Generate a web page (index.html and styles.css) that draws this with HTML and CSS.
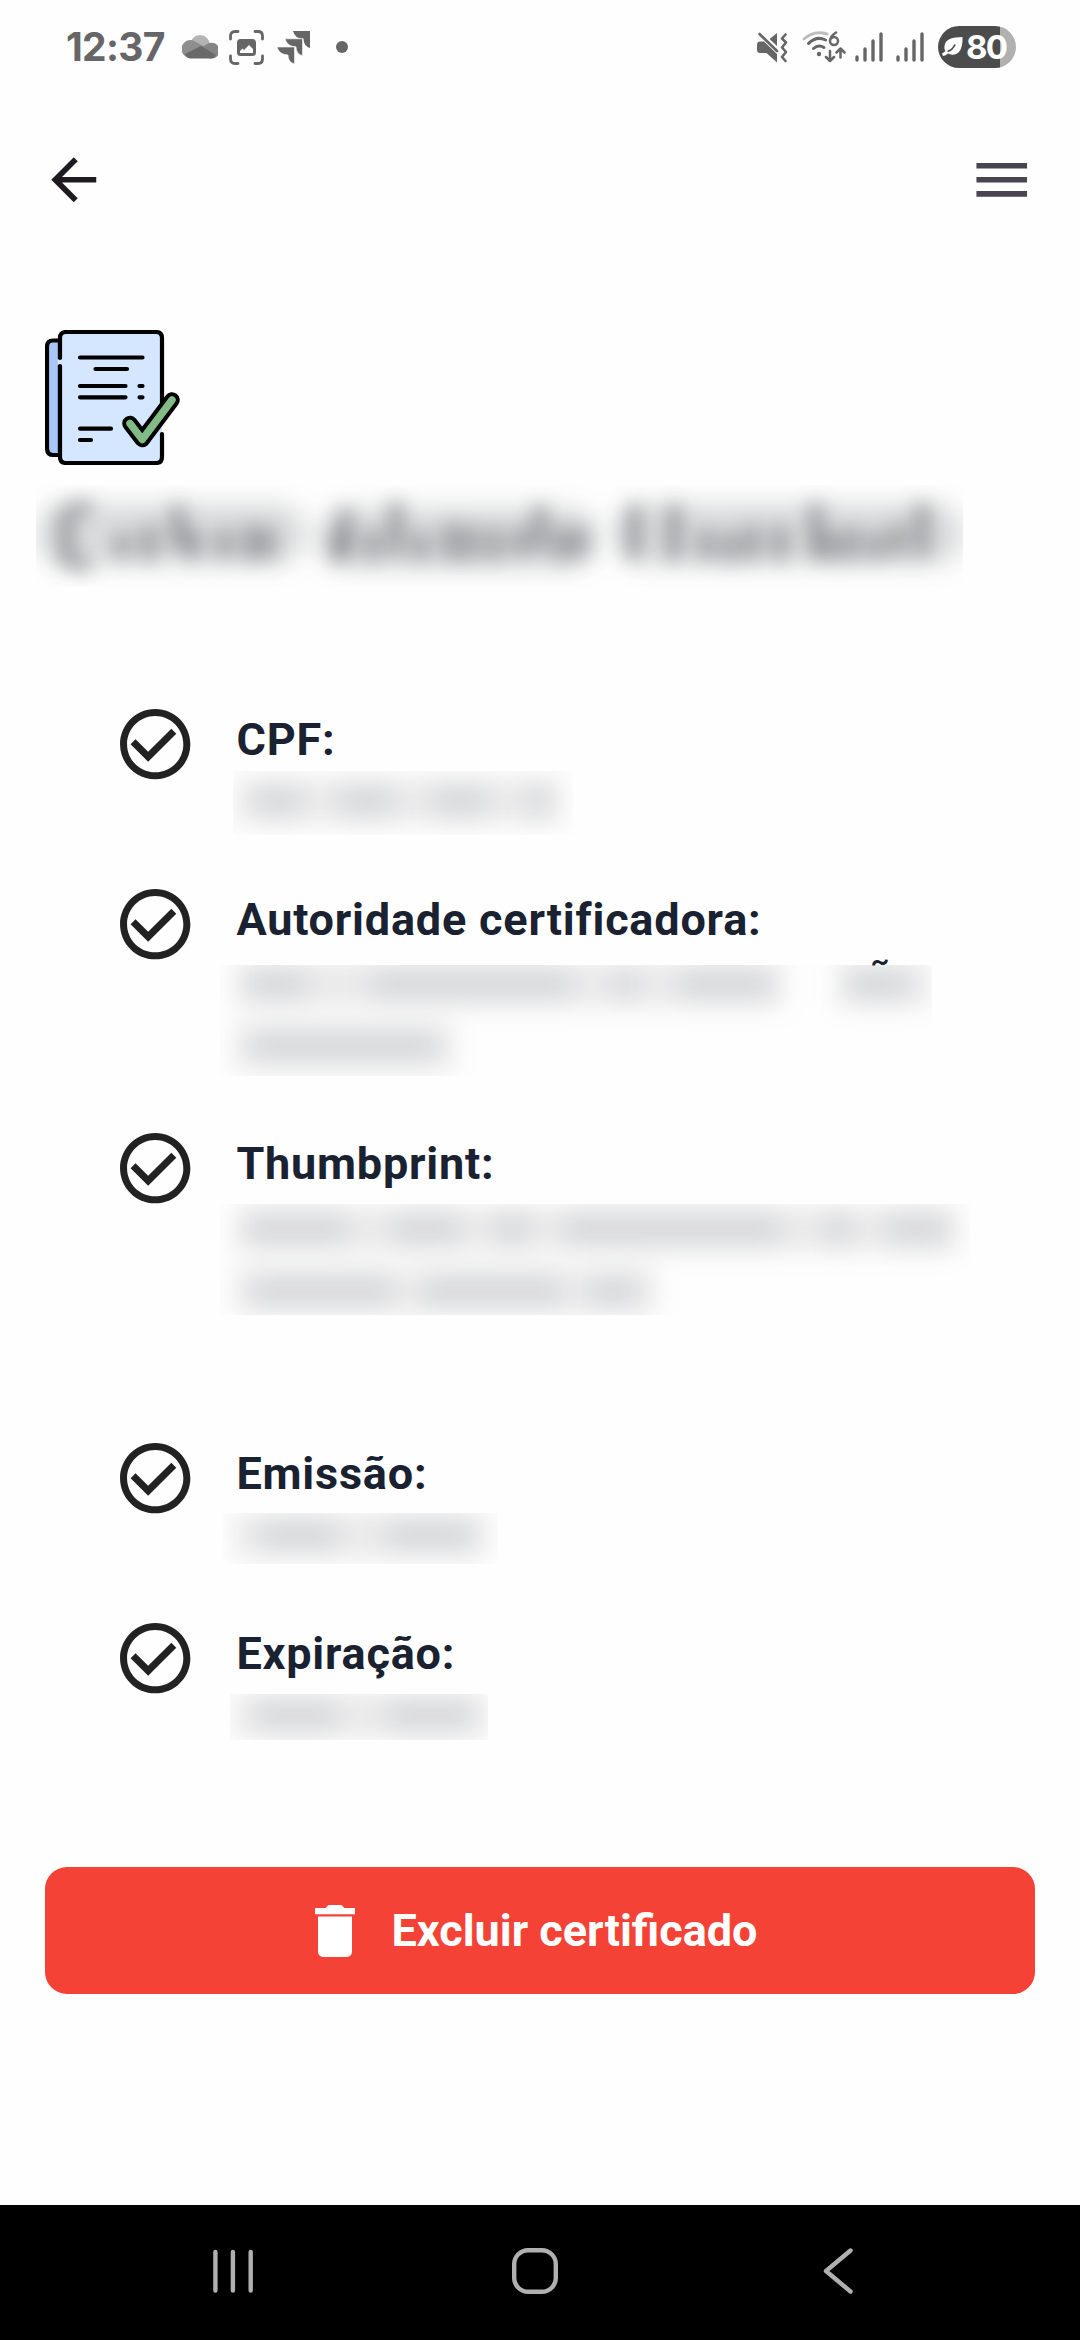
FILE: index.html
```
<!DOCTYPE html>
<html lang="pt-BR">
<head>
<meta charset="utf-8">
<title>Certificado</title>
<link rel="stylesheet" href="styles.css">
</head>
<body>
<svg class="defs" width="0" height="0" aria-hidden="true">
  <symbol id="check" viewBox="0 0 24 24"><path d="M16.59 7.58L10 14.17l-3.59-3.58L5 12l5 5 8-8zM12 2C6.48 2 2 6.48 2 12s4.48 10 10 10 10-4.48 10-10S17.52 2 12 2zm0 18c-4.42 0-8-3.58-8-8s3.58-8 8-8 8 3.58 8 8-3.58 8-8 8z"/></symbol>
  <symbol id="signal" viewBox="0 0 28 30"><path d="M2 25v3M10 17v11M18 9v19M26 2v26" fill="none" stroke="#666" stroke-width="3.4" stroke-linecap="round"/></symbol>
</svg>
<div class="screen">
  <header class="status">
    <div class="status-left">
      <span class="clock">12:37</span>
      <svg class="cloud" width="36" height="24" viewBox="0 0 36 24">
        <circle cx="18" cy="10" r="10" fill="#b4b4b4"/>
        <path d="M8 5a9 9 0 0 1 6 2l11 6-16 10A9 9 0 0 1 8 5z" fill="#8e8e8e"/>
        <path d="M14 16l11-7a8 8 0 1 1 3 14.500z" fill="#858585"/>
        <path d="M3 19l16-8 15 9q-2 3.500-6 3.500H8Q5 23 3 19z" fill="#696969"/>
      </svg>
      <svg class="capture" width="35" height="35" viewBox="0 0 35 35">
        <path d="M1.500 9V6q0-4.500 4.500-4.500h3M26 1.500h3q4.500 0 4.500 4.500v3M33.500 26v3q0 4.500-4.500 4.500h-3M9 33.500H6q-4.500 0-4.500-4.500v-3" fill="none" stroke="#666" stroke-width="2.800" stroke-linecap="round"/>
        <path d="M11.500 9h12q3.500 0 3.500 3.500v10q0 3.500-3.500 3.500h-12Q8 26 8 22.500v-10Q8 9 11.500 9zM11 23h13v-4l-4-4-5 5-1.500-1.500L11 21z" fill="#666" fill-rule="evenodd"/>
      </svg>
      <svg class="arrows" width="33" height="33" viewBox="0 0 33 33" fill="#666">
        <path d="M16 0h17v17q-6.500-2-6.500-9.500Q18 8 16 0z"/>
        <path d="M8 7.800h17.500v17q-6.500-2-6.500-9Q10 15.500 8 7.800z" stroke="#fefefe" stroke-width=".6"/>
        <path d="M0 16h17.500v17q-6.500-2-6.500-9Q2 23.500 0 16z" stroke="#fefefe" stroke-width=".6"/>
      </svg>
      <span class="dot"></span>
    </div>
    <div class="status-right">
      <svg class="mute" width="31" height="31" viewBox="0 0 31 31">
        <path d="M0 13q0-3.500 3-3.500h4L20 22v8.500L9.500 21H3q-3 0-3-3zM12.500 7L20 1v13z" fill="#666"/>
        <path d="M2.500 2L20 19" stroke="#666" stroke-width="2.600" stroke-linecap="round"/>
        <path d="M28.500 2.500l-3.500 4 4 4-4 5 4 4.500-4 5 3.500 4" fill="none" stroke="#666" stroke-width="2.600" stroke-linecap="round" stroke-linejoin="round"/>
      </svg>
      <svg class="wifi" width="44" height="32" viewBox="0 0 44 32" fill="none" stroke="#666" stroke-width="3" stroke-linecap="round">
        <path d="M2 8Q12-1 25 3" stroke="#bdbdbd"/>
        <path d="M6.500 12.500q8-8 17-3.500M11.500 17.500q5-4.500 10.500-1"/>
        <circle cx="17" cy="23" r="2.200" fill="#666" stroke="none"/>
        <path d="M34 1.500q-6 4-6 8.500a4 4 0 1 0 4-4q-2 0-3.500 2" stroke-width="2.500"/>
        <path d="M28 20v10m-4-4l4 4 4-4M38.500 26.500v-9m-4 4l4-4 4 4" stroke-width="2.500" stroke-linejoin="round"/>
      </svg>
      <svg class="sig1" width="28" height="30"><use href="#signal"/></svg>
      <svg class="sig2" width="28" height="30"><use href="#signal"/></svg>
      <span class="battery">
        <svg width="21" height="20" viewBox="0 0 21 20"><path d="M20.500 0Q5 0 3 7q-1.500 4.500.5 7-2 1.500-3.500 2.500l1 2.500q3-.5 5-2.500 6 3 10.500-1Q21 11 20.500 0z" fill="#fff"/><path d="M5.500 14.500q5-1.500 7.500-7" fill="none" stroke="#4c4c4c" stroke-width="1.800"/></svg>
        <span>80</span>
      </span>
    </div>
  </header>

  <nav class="appbar">
    <svg width="67.500" height="67.500" viewBox="0 0 24 24"><path d="M20 11H7.830l5.590-5.590L12 4l-8 8 8 8 1.410-1.410L7.830 13H20z" fill="#1d1b20"/></svg>
    <svg width="67.500" height="67.500" viewBox="0 0 24 24"><path d="M3 18h18v-2H3zM3 13h18v-2H3zM3 6v2h18V6z" fill="#49454f"/></svg>
  </nav>

  <main>
    <svg class="doc" width="135" height="135" viewBox="0 0 135 135" fill="none" stroke="#000" stroke-width="4.200" stroke-linecap="round" stroke-linejoin="round">
      <path d="M15 10.500H8q-6 0-6 6V118q0 7 6 7h7z" fill="#a8c7f7"/>
      <rect x="15" y="2" width="102" height="131" rx="6" fill="#d4e7ff" stroke="none"/>
      <path d="M15 35v-6" stroke="#d4e7ff" stroke-width="5" stroke-linecap="butt"/>
      <path d="M15 28V8q0-6 6-6h90q6 0 6 6v65M117 104v23q0 6-6 6H21q-6 0-6-6V36"/>
      <path d="M35 27.500h62.500M50.500 39H82M35 56h45.500M35 67.300h45.500M94.500 56h3M94.500 67.300h3M35 98.700h31M35 110h11"/>
      <path d="M85 93.500L97.300 109.500 127 70" stroke-width="15.500"/>
      <path d="M85 93.500L97.300 109.500 127 70" stroke="#81bb85" stroke-width="7.500"/>
    </svg>

    <svg class="redacted holder" width="927" height="102" viewBox="36 485 927 102" role="img" aria-label="Nome oculto">
      <g class="haze"><path d="M66 534H276M348 538H568M644 534H934"/></g>
      <g class="strokes">
        <path d="M66 514v46M76 508h10M76 564h10M122 538v16M149 530v26M178 510v36M194 534v20M224 534v20M250 530v26M268 532v22"/>
        <path d="M338 536v20M345 514v38M372 534v22M396 506v46M421 536v20M450 528v28M470 530v26M494 532v24M520 532v20M540 510v38M562 532v24M580 532v20"/>
        <path d="M634 510v44M674 510v46M706 534v22M730 536v22M752 530v26M780 530v26M816 508v46M832 536v20M852 532v24M876 536v20M898 528v24M922 508v44"/>
      </g>
    </svg>

    <ul class="fields">
      <li class="field">
        <svg class="tick" width="84.400" height="84.400"><use href="#check"/></svg>
        <div><h2>CPF:</h2>
          <svg class="redacted cpf" width="340" height="64" viewBox="233 771 340 64" role="img" aria-label="CPF oculto"><g><path class="base" d="M236 801H562"/><path d="M256 801H300M340 801H392M434 801H486M528 801H548"/></g></svg>
        </div>
      </li>
      <li class="field authority">
        <svg class="tick" width="84.400" height="84.400"><use href="#check"/></svg>
        <div><h2>Autoridade certificadora:</h2>
          <svg class="redacted two" width="712" height="111" viewBox="220 965 712 111" role="img" aria-label="Autoridade oculta"><g><path class="base" d="M234 984H784M836 984H930M234 1046H454"/><path d="M250 984H306M372 984H570M614 984H636M680 984H770M850 984H908M252 1046H436"/></g></svg>
          <span class="accent">˜</span>
        </div>
      </li>
      <li class="field thumbprint">
        <svg class="tick" width="84.400" height="84.400"><use href="#check"/></svg>
        <div><h2>Thumbprint:</h2>
          <svg class="redacted two" width="750" height="111" viewBox="220 1204 750 111" role="img" aria-label="Thumbprint oculto"><g><path class="base" d="M234 1229H958M234 1291H656"/><path d="M250 1229H346M394 1229H460M496 1229H528M564 1229H780M826 1229H850M888 1229H946M254 1291H390M424 1291H560M590 1291H636"/></g></svg>
        </div>
      </li>
      <li class="field">
        <svg class="tick" width="84.400" height="84.400"><use href="#check"/></svg>
        <div><h2>Emissão:</h2>
          <svg class="redacted issued" width="275" height="51" viewBox="223 1513 275 51" role="img" aria-label="Data oculta"><g><path class="base" d="M234 1535H488"/><path d="M262 1535H336M388 1535H470"/></g></svg>
        </div>
      </li>
      <li class="field">
        <svg class="tick" width="84.400" height="84.400"><use href="#check"/></svg>
        <div><h2>Expiração:</h2>
          <svg class="redacted expires" width="258" height="46" viewBox="230 1694 258 46" role="img" aria-label="Data oculta"><g><path class="base" d="M234 1715H488"/><path d="M258 1715H336M388 1715H470"/></g></svg>
        </div>
      </li>
    </ul>

    <button class="delete" type="button">
      <svg width="40" height="52" viewBox="0 0 40 52" fill="#fff"><path d="M0 3h10.500l3-3h13l3 3H40v6.200H0zM3 11.500h34V46q0 6-6 6H9q-6 0-6-6z"/></svg>
      <span>Excluir certificado</span>
    </button>
  </main>

  <footer class="navbar">
    <svg width="42" height="46" viewBox="212 2248 42 46"><path d="M215.400 2252v38.500M232.900 2252v38.500M250.700 2252v38.500"/></svg>
    <svg class="home" width="46" height="46" viewBox="0 0 46 46"><rect x="2.200" y="2.200" width="41.600" height="41.600" rx="14"/></svg>
    <svg width="30" height="46" viewBox="0 0 30 46"><path d="M27.500 2.500L3 23l24.500 20.500"/></svg>
  </footer>
</div>
</body>
</html>
```

FILE: styles.css
```
* { box-sizing: border-box; }

body {
  margin: 0;
  background: #fefefe;
  font-family: Roboto, "Liberation Sans", sans-serif;
}

svg { display: block; flex: none; }
.defs { position: absolute; }

.screen {
  display: flex;
  flex-direction: column;
  width: 1080px;
  height: 2340px;
  overflow: hidden;
}

/* status bar */
.status {
  display: flex;
  justify-content: space-between;
  height: 94px;
  padding: 0 64px 0 66px;
}
.status-left, .status-right { display: flex; align-items: center; }
.clock {
  width: 100px;
  margin-right: 16px;
  color: #666;
  font: 700 39px/94px Inter, sans-serif;
  letter-spacing: -0.7px;
  white-space: nowrap;
}
.capture { margin-left: 11px; }
.arrows { margin-left: 13px; }
.dot {
  width: 12px;
  height: 12px;
  margin-left: 26px;
  border-radius: 50%;
  background: #666;
}
.wifi { margin-left: 14px; }
.sig1 { margin-left: 9px; }
.sig2 { margin-left: 13px; }
.battery {
  display: flex;
  align-items: center;
  width: 78px;
  height: 42px;
  margin-left: 14px;
  padding-left: 4px;
  border-radius: 21px;
  background: linear-gradient(to right, #4c4c4c 62px, #b0b0b0 62px);
  color: #fff;
  font: 700 33px/42px Inter, sans-serif;
  letter-spacing: -1.8px;
}
.battery span { margin-left: 3px; }

/* app bar */
.appbar {
  display: flex;
  justify-content: space-between;
  align-items: center;
  height: 171px;
  padding: 0 44.500px 0 40px;
}

/* certificate */
main {
  display: flex;
  flex: 1;
  flex-direction: column;
  padding: 65px 45px 0;
}
.redacted { overflow: hidden; }
.redacted g {
  fill: none;
  stroke: rgba(70, 82, 92, 0.1);
  stroke-width: 32px;
  filter: blur(12px);
}
.redacted .base {
  stroke: rgba(70, 76, 80, 0.11);
  stroke-width: 46px;
}
.holder { margin: 20px 0 0 -9px; }
.holder .haze {
  stroke: rgba(60, 64, 70, 0.18);
  stroke-width: 62px;
  stroke-linecap: round;
  filter: blur(12px);
}
.holder .strokes {
  stroke: rgba(51, 54, 60, 0.55);
  stroke-width: 11px;
  stroke-linecap: round;
  filter: blur(10px);
}

.fields {
  display: flex;
  flex-direction: column;
  margin: 115px 0 0;
  padding: 0 0 0 68px;
  list-style: none;
}
.field { display: flex; gap: 39px; height: 180px; }
.authority { height: 244px; }
.thumbprint { height: 310px; }
.tick { fill: #222; }
.field div { position: relative; }
h2 {
  margin: 11px 0 0;
  color: #1a2231;
  font-size: 45px;
  font-weight: 700;
  line-height: 54px;
  letter-spacing: 0.8px;
  white-space: nowrap;
}
.accent {
  position: absolute;
  left: 633px;
  top: 68px;
  color: #1a2231;
  font-size: 45px;
  line-height: 54px;
}
.cpf { margin: 4px 0 0 -3px; }
.two { margin: 18px 0 0 -16px; }
.thumbprint .two { margin-top: 13px; }
.issued { margin: 12px 0 0 -13px; }
.expires { margin: 13px 0 0 -6px; }

.delete {
  display: flex;
  align-items: center;
  justify-content: center;
  gap: 36px;
  height: 127px;
  margin-top: 71px;
  padding: 0 7px 0 0;
  border: 0;
  border-radius: 22px;
  background: #f44336;
  color: #fff;
  font: 700 45px/54px Roboto, sans-serif;
}

/* system navigation */
.navbar {
  display: flex;
  align-items: center;
  height: 135px;
  padding: 0 227px 3px 212px;
  background: #000;
}
.navbar .home { margin: 0 265px 0 258px; }
.navbar svg {
  fill: none;
  stroke: #b0b0b0;
  stroke-width: 4.4px;
  stroke-linecap: round;
  stroke-linejoin: round;
}
```
